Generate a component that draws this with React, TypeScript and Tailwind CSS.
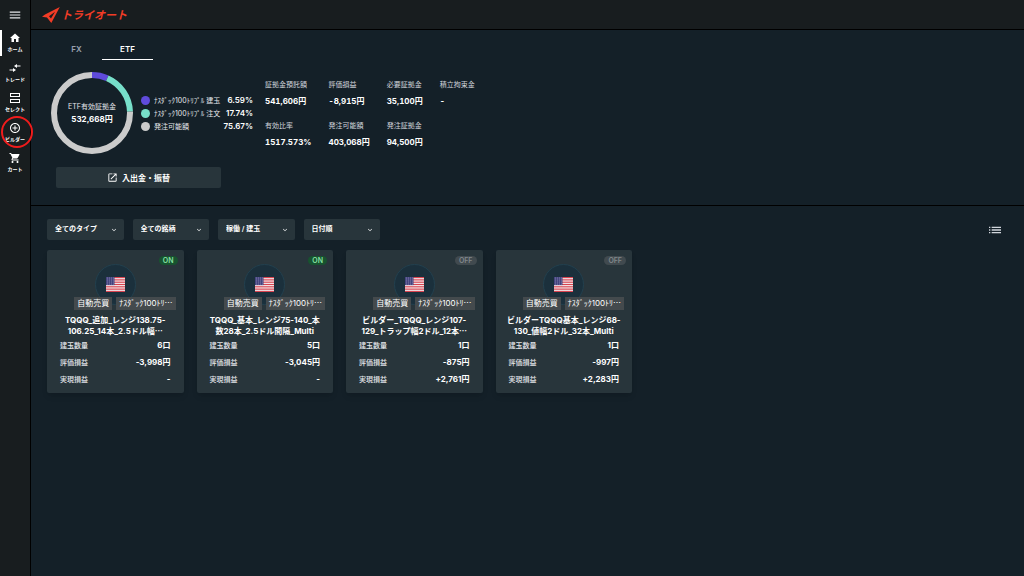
import type { ReactNode } from "react";
import {
    MdAddCircleOutline,
    MdExpandMore,
    MdHome,
    MdList,
    MdMenu,
    MdOpenInNew,
    MdShoppingCart,
} from "react-icons/md";

type Strategy = {
    id: number;
    active: boolean;
    title: string[];
    clipped: boolean;
    lots: string;
    unrealized: string;
    realized: string;
};

const strategies: Strategy[] = [
    {
        id: 1,
        active: true,
        title: ["TQQQ_追加_レンジ138.75-", "106.25_14本_2.5ドル幅"],
        clipped: true,
        lots: "6口",
        unrealized: "-3,998円",
        realized: "-",
    },
    {
        id: 2,
        active: true,
        title: ["TQQQ_基本_レンジ75-140_本", "数28本_2.5ドル間隔_Multi"],
        clipped: false,
        lots: "5口",
        unrealized: "-3,045円",
        realized: "-",
    },
    {
        id: 3,
        active: false,
        title: ["ビルダー_TQQQ_レンジ107-", "129_トラップ幅2ドル_12本"],
        clipped: true,
        lots: "1口",
        unrealized: "-875円",
        realized: "+2,761円",
    },
    {
        id: 4,
        active: false,
        title: ["ビルダーTQQQ基本_レンジ68-", "130_値幅2ドル_32本_Multi"],
        clipped: false,
        lots: "1口",
        unrealized: "-997円",
        realized: "+2,283円",
    },
];

const shares = [
    { name: "ﾅｽﾀﾞｯｸ100ﾄﾘﾌﾟﾙ 建玉", value: 6.59, dot: "bg-[#5f4bdb]", color: "#5f4bdb" },
    { name: "ﾅｽﾀﾞｯｸ100ﾄﾘﾌﾟﾙ 注文", value: 17.74, dot: "bg-[#77dfca]", color: "#77dfca" },
    { name: "発注可能額", value: 75.67, dot: "bg-[#cbcbcb]", color: "#cbcbcb" },
];

const stats = [
    { label: "証拠金預託額", value: "541,606円" },
    { label: "評価損益", value: "-8,915円" },
    { label: "必要証拠金", value: "35,100円" },
    { label: "積立拘束金", value: "-" },
    { label: "有効比率", value: "1517.573%" },
    { label: "発注可能額", value: "403,068円" },
    { label: "発注証拠金", value: "94,500円" },
];

const filters = [
    { label: "タイプ", value: "全てのタイプ" },
    { label: "銘柄", value: "全ての銘柄" },
    { label: "状態", value: "稼働 / 建玉" },
    { label: "並び順", value: "日付順" },
];

const TradeIcon = () => (
    <svg viewBox="0 0 12 12" className="size-3" fill="currentColor">
        <path d="M5 4l3-2v1.5h3.5v1H8V6zM7 8L4 6v1.5H.5v1H4V10z" />
    </svg>
);

const SelectIcon = () => (
    <svg viewBox="0 0 12 12" className="size-3" fill="none" stroke="currentColor">
        <rect x="1.5" y="1.5" width="9" height="3" />
        <rect x="1.5" y="7.5" width="9" height="3" />
    </svg>
);

const Logo = () => (
    <a href="#" className="flex items-center gap-px text-[#f23c26]">
        <svg viewBox="0 0 18 16" className="h-4 w-[18px]" fill="currentColor">
            <path
                fillRule="evenodd"
                d="M0 9.8 3 7.4 17.8 0 9.3 16 5 10.4zM7 9.2 9 11.6 13 4.8z"
            />
        </svg>
        <span className="text-[11px] leading-4 font-bold italic">トライオート</span>
    </a>
);

const Flag = () => (
    <svg viewBox="0 0 38 30" className="h-[15px] w-[19px]">
        <rect width="38" height="30" fill="#f3eef0" />
        {[0, 1, 2, 3, 4, 5, 6].map((i) => (
            <rect key={i} y={i * 4.62} width="38" height="2.31" fill="#d8434f" />
        ))}
        <rect width="17" height="16.2" fill="#40407c" />
        {[2, 6, 10, 14].map((y) =>
            [2.5, 6.5, 10.5, 14.5].map((x) => (
                <circle key={`${x}-${y}`} cx={x} cy={y} r="0.9" fill="#d8d8ea" />
            ))
        )}
    </svg>
);

// Inter puts the dots on the baseline, the Japanese font centres them
const Ellipsis = () => (
    <span className="font-['Noto_Sans_CJK_JP',sans-serif] leading-none">…</span>
);

const NavItem = ({
    icon,
    label,
    active,
    marked,
}: {
    icon: ReactNode;
    label: string;
    active?: boolean;
    marked?: boolean;
}) => (
    <a
        href="#"
        className={`relative flex h-[30px] flex-col items-center pt-0.5 text-white ${
            active
                ? "before:absolute before:top-0 before:left-0 before:h-[26px] before:w-0.5 before:bg-white"
                : ""
        }`}
    >
        {icon}
        <span className="mt-px text-[5px] leading-2 font-bold whitespace-nowrap">
            {label}
        </span>
        {marked && (
            <span className="absolute -top-1 left-px z-10 size-8 rounded-full border-2 border-[#ef1c1c]" />
        )}
    </a>
);

const Donut = () => {
    const radius = 38;
    const length = 2 * Math.PI * radius;
    let offset = 0;

    return (
        <div className="relative size-[82px]">
            <svg viewBox="0 0 82 82" className="size-full -rotate-90">
                {shares.map((share) => {
                    const start = offset;
                    offset += share.value;
                    return (
                        <circle
                            key={share.name}
                            cx="41"
                            cy="41"
                            r={radius}
                            fill="none"
                            stroke={share.color}
                            strokeWidth="6"
                            strokeDasharray={`${(share.value / 100) * length} ${length}`}
                            strokeDashoffset={(-start / 100) * length}
                        />
                    );
                })}
            </svg>
            <div className="absolute inset-0 flex flex-col items-center justify-center leading-3">
                <span className="text-[7px] text-gray-200">ETF有効証拠金</span>
                <span className="text-[8px] font-bold">532,668円</span>
            </div>
        </div>
    );
};

const StrategyCard = ({ strategy }: { strategy: Strategy }) => {
    const rows = [
        { label: "建玉数量", value: strategy.lots },
        { label: "評価損益", value: strategy.unrealized },
        { label: "実現損益", value: strategy.realized },
    ];

    return (
        <article className="relative rounded-xs bg-[#28353b] pt-[14px] pb-[5px] shadow-md">
            <span
                className={`absolute top-1.5 right-1.5 rounded-full px-1 text-[7px] leading-[9px] font-semibold ${
                    strategy.active
                        ? "bg-[#17532f] text-[#86e0a4]"
                        : "bg-[#414a4f] text-[#80878b]"
                }`}
            >
                {strategy.active ? "ON" : "OFF"}
            </span>
            <div className="mx-auto flex size-[41px] items-center justify-center rounded-full border border-[#22404e] bg-[#1b303c]">
                <Flag />
            </div>
            <div className="relative -mt-2 mr-2 flex justify-end gap-1 text-[8px] leading-[13px] whitespace-nowrap">
                <span className="bg-[#444a4d] px-[3px]">自動売買</span>
                <span className="bg-[#444a4d] px-[3px]">
                    ﾅｽﾀﾞｯｸ100ﾄﾘ
                    <Ellipsis />
                </span>
            </div>
            <h2 className="mt-[5px] text-center text-[8px] leading-[11px] font-bold whitespace-nowrap">
                {strategy.title[0]}
                <br />
                {strategy.title[1]}
                {strategy.clipped && <Ellipsis />}
            </h2>
            <dl className="px-[13px]">
                {rows.map((row) => (
                    <div
                        key={row.label}
                        className="flex items-center justify-between leading-[17px]"
                    >
                        <dt className="text-[7px] font-medium text-gray-200">{row.label}</dt>
                        <dd className="text-[8px] font-bold">{row.value}</dd>
                    </div>
                ))}
            </dl>
        </article>
    );
};

const App = () => {
    return (
        <div
            lang="ja"
            className="flex min-h-screen bg-[#142028] font-['Inter','Noto_Sans_CJK_JP',sans-serif] text-white"
        >
            <nav className="flex w-[31px] shrink-0 flex-col border-r border-black bg-[#181d1f]">
                <button
                    aria-label="メニュー"
                    className="flex h-[30px] items-center justify-center text-gray-200"
                >
                    <MdMenu className="size-[14px]" />
                </button>
                <NavItem icon={<MdHome className="size-3" />} label="ホーム" active />
                <NavItem icon={<TradeIcon />} label="トレード" />
                <NavItem icon={<SelectIcon />} label="セレクト" />
                <NavItem
                    icon={<MdAddCircleOutline className="size-3" />}
                    label="ビルダー"
                    marked
                />
                <NavItem icon={<MdShoppingCart className="size-3" />} label="カート" />
            </nav>

            <div className="min-w-0 flex-1">
                <header className="flex h-[30px] items-center border-b border-black bg-[#181d1f] pl-[11px]">
                    <Logo />
                </header>

                <main>
                    <section className="border-b border-black px-5 pt-2 pb-[17px]">
                        <div role="tablist" className="flex text-[8px] font-semibold">
                            <button role="tab" className="h-[22px] w-[51px] text-gray-400">
                                FX
                            </button>
                            <button
                                role="tab"
                                aria-selected="true"
                                className="h-[22px] w-[51px] border-b border-white"
                            >
                                ETF
                            </button>
                        </div>

                        <div className="mt-3 flex">
                            <Donut />
                            <ul className="mt-[22px] ml-2 w-28">
                                {shares.map((share) => (
                                    <li
                                        key={share.name}
                                        className="flex h-[13px] items-center leading-[13px] whitespace-nowrap"
                                    >
                                        <span className={`size-[9px] rounded-full ${share.dot}`} />
                                        <span className="ml-1 text-[7px] text-gray-200">
                                            {share.name}
                                        </span>
                                        <span className="ml-auto text-[8px] font-semibold">
                                            {share.value}%
                                        </span>
                                    </li>
                                ))}
                            </ul>
                            <dl className="mt-[5px] ml-3 grid grid-cols-[repeat(4,auto)] content-start gap-x-[17px] gap-y-[9px] tabular-nums">
                                {stats.map((stat) => (
                                    <div key={stat.label} className="leading-4">
                                        <dt className="text-[7px] text-gray-300">{stat.label}</dt>
                                        <dd className="text-[8px] font-bold">{stat.value}</dd>
                                    </div>
                                ))}
                            </dl>
                        </div>

                        <button className="mt-[13px] ml-[5px] flex h-[21px] w-[165px] items-center justify-center gap-1 rounded-xs bg-[#28353b] text-[8px] font-bold">
                            <MdOpenInNew className="size-[11px]" />
                            入出金・振替
                        </button>
                    </section>

                    <section className="pt-[13px] pr-[21px] pb-4 pl-4">
                        <div className="flex items-center justify-between">
                            <div className="grid w-full max-w-[333px] grid-cols-4 gap-[9px]">
                                {filters.map((filter) => (
                                    <label key={filter.label} className="relative flex items-center">
                                        <select
                                            aria-label={filter.label}
                                            className="h-[21px] w-full appearance-none rounded-xs bg-[#28353b] pl-2 text-[7px] font-semibold"
                                        >
                                            <option>{filter.value}</option>
                                        </select>
                                        <MdExpandMore className="pointer-events-none absolute right-1.5 size-2" />
                                    </label>
                                ))}
                            </div>
                            <button aria-label="リスト表示" className="text-gray-300">
                                <MdList className="size-4" />
                            </button>
                        </div>

                        <div className="mt-2.5 grid max-w-[585px] grid-cols-4 gap-[13px]">
                            {strategies.map((strategy) => (
                                <StrategyCard key={strategy.id} strategy={strategy} />
                            ))}
                        </div>
                    </section>
                </main>
            </div>
        </div>
    );
};

export default App;
